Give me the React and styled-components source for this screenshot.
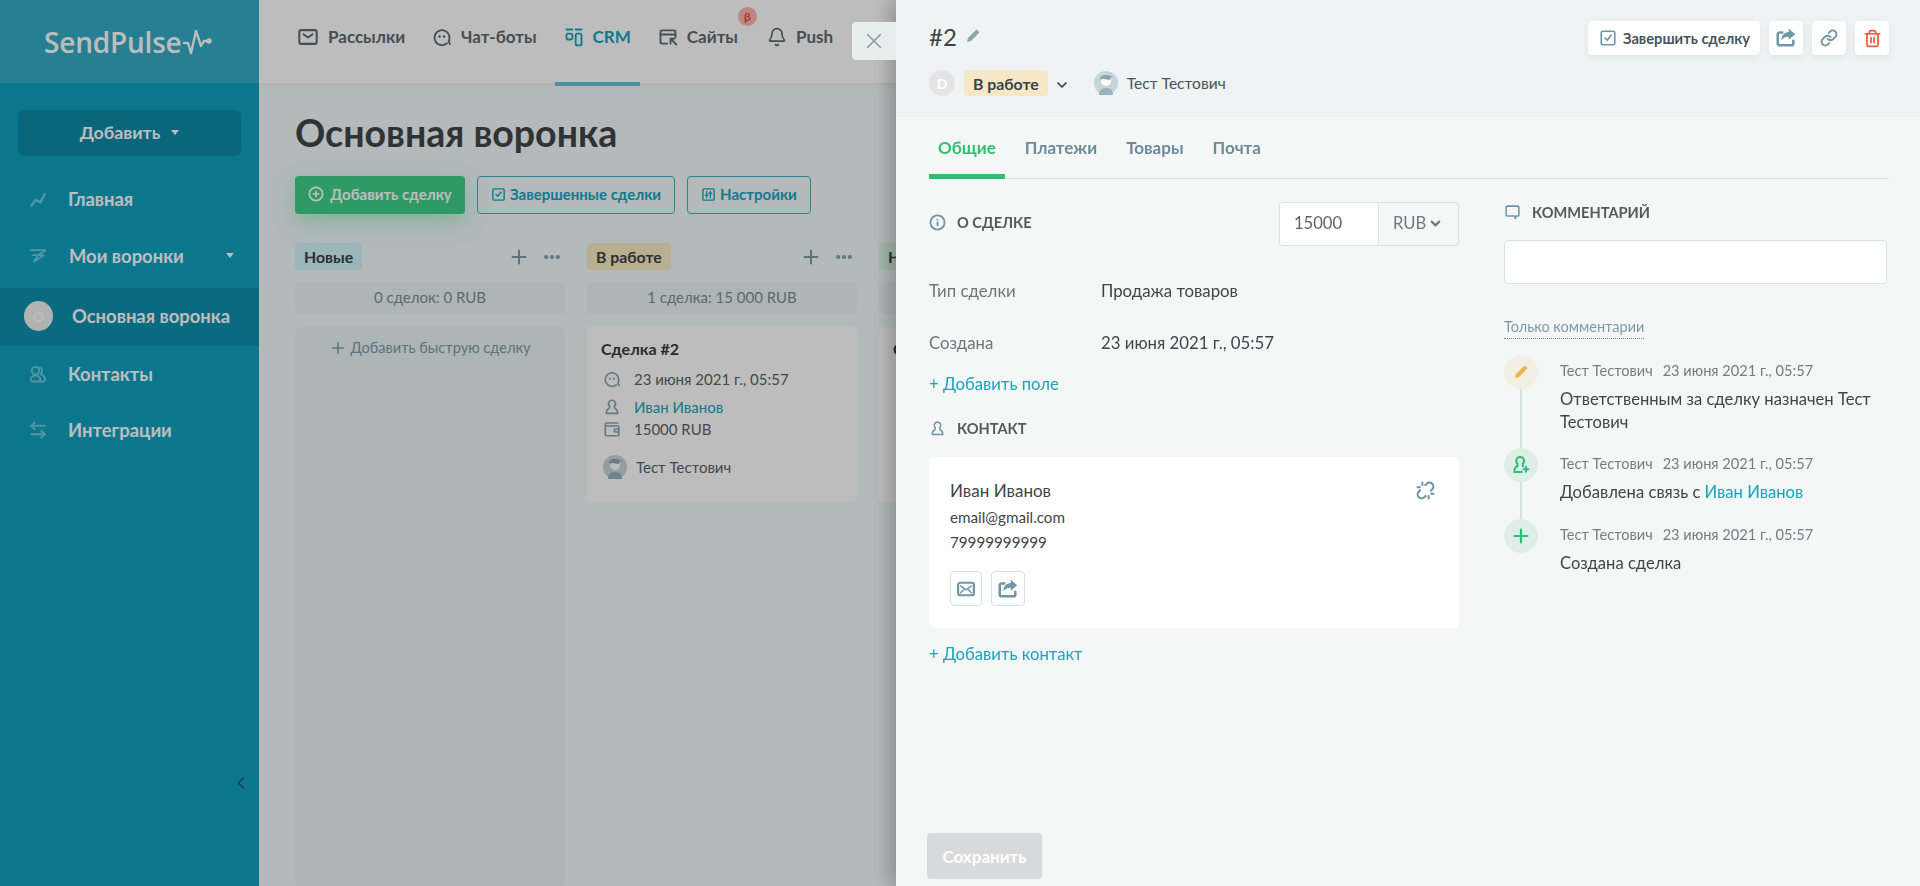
import React from 'react';
import styled, { createGlobalStyle } from 'styled-components';
import { Bell, ChevronDown, Plus, MoreHorizontal, Trash2, Link as LinkIcon, Unlink, X, ChevronLeft, Info, ArrowLeftRight } from 'lucide-react';

const GlobalStyle = createGlobalStyle`
  html, body { margin: 0; padding: 0; height: 100%; overflow: hidden; }
  body { font-family: Lato, "Noto Sans", sans-serif; color: #3c4245; }
  * { box-sizing: border-box; }
`;

const Page = styled.div`
  display: flex;
  height: 100vh;
  background: #f3fafb;
  overflow: hidden;
`;

const Sidebar = styled.aside`
  width: 259px;
  flex: none;
  background: #0fa1c1;
  display: flex;
  flex-direction: column;
  position: relative;
`;

const LogoBar = styled.div`
  height: 83px;
  background: #35acc8;
  display: flex;
  align-items: center;
  padding-left: 44px;
  gap: 1px;
`;

const LogoText = styled.span`
  font-family: "Open Sans", sans-serif;
  font-size: 28px;
  font-weight: 600;
  letter-spacing: -0.2px;
  color: #fff;
`;

const AddButton = styled.div`
  margin: 27px 18px 14px;
  height: 46px;
  background: #0d8aa7;
  border-radius: 6px;
  display: flex;
  align-items: center;
  justify-content: center;
  gap: 11px;
  padding-bottom: 2px;
  color: #fff;
  font-size: 17.8px;
  font-weight: 700;
`;

const Caret = styled.i`
  width: 0;
  height: 0;
  border: 4px solid transparent;
  border-top: 5px solid #fff;
  border-bottom: 0;
  display: block;
`;

const NavRow = styled.div`
  height: ${p => (p.$active ? 58 : p.$h || 57)}px;
  margin-top: ${p => (p.$active ? 4 : 0)}px;
  padding-bottom: ${p => (p.$active ? 2 : 0)}px;
  display: flex;
  align-items: center;
  padding-left: ${p => (p.$active ? 24 : 28)}px;
  gap: ${p => (p.$active ? 19 : 0)}px;
  background: ${p => (p.$active ? '#0e90ad' : 'transparent')};
  color: #fff;
  font-size: 18.4px;
  font-weight: 700;
  position: relative;
  svg { flex: none; color: #6fc9dd; }
`;

const NavLabel = styled.span`
  margin-left: ${p => p.$offset || 20}px;
`;

const NavCaret = styled(Caret)`
  position: absolute;
  right: 25px;
`;

const Bullet = styled.span`
  width: 29px;
  height: 30px;
  border-radius: 50%;
  background: #f0f0f0;
  color: #fff;
  font-size: 14px;
  font-weight: 700;
  display: flex;
  align-items: center;
  justify-content: center;
`;

const Collapse = styled.div`
  position: absolute;
  left: 231px;
  bottom: 93px;
  color: #0b4f60;
  line-height: 0;
`;

const Main = styled.main`
  flex: 1;
  min-width: 0;
  overflow: hidden;
`;

const TopBar = styled.nav`
  height: 83px;
  background: #fff;
  display: flex;
  padding-left: 29px;
  box-shadow: 0 1px 6px rgba(0, 0, 0, 0.08);
`;

const TopItem = styled.div`
  display: flex;
  align-items: center;
  gap: 9px;
  height: 86px;
  padding: 0 9px 9px;
  margin-right: ${p => p.$gap ?? 9}px;
  font-size: 17px;
  font-weight: 700;
  color: ${p => (p.$active ? '#13a5c0' : '#5d6a70')};
  border-bottom: 4px solid ${p => (p.$active ? '#6cc3d6' : 'transparent')};
  position: relative;
  white-space: nowrap;
`;

const Beta = styled.span`
  position: absolute;
  top: 7px;
  right: -10px;
  width: 19px;
  height: 19px;
  border-radius: 50%;
  background: #fdb5b5;
  color: #f0473f;
  font-size: 12px;
  display: flex;
  align-items: center;
  justify-content: center;
`;

const Content = styled.div`
  padding: 28px 0 0 36px;
`;

const Title = styled.h1`
  margin: 0 0 22px;
  font-size: 37.5px;
  line-height: 43px;
  font-weight: 700;
  color: #41464a;
  white-space: nowrap;
`;

const Actions = styled.div`
  display: flex;
  gap: 12px;
  margin-bottom: 29px;
`;

const GreenBtn = styled.div`
  width: 170px;
  height: 38px;
  padding-bottom: 2px;
  background: #3fd08a;
  color: #fff;
  border-radius: 4px;
  display: flex;
  align-items: center;
  justify-content: center;
  gap: 6px;
  font-size: 15px;
  font-weight: 700;
  box-shadow: 0 8px 24px rgba(63, 208, 138, 0.35);
`;

const OutlineBtn = styled.div`
  height: 38px;
  padding: 0 13px 2px;
  border: 1px solid #3eb0c8;
  color: #13a5c0;
  border-radius: 4px;
  display: flex;
  align-items: center;
  gap: 4px;
  font-size: 15px;
  font-weight: 700;
  white-space: nowrap;
`;

const Board = styled.div`
  display: flex;
  gap: 22px;
`;

const Column = styled.section`
  width: 270px;
  flex: none;
`;

const ColHead = styled.div`
  height: 27px;
  display: flex;
  align-items: center;
  justify-content: space-between;
  color: #7f9aa7;
  margin-bottom: 12px;
`;

const Tag = styled.span`
  background: ${p => p.$bg};
  border-radius: 4px;
  height: ${p => p.$h || 27}px;
  padding: 0 9px;
  display: inline-flex;
  align-items: center;
  color: #3c4245;
  font-size: 15.8px;
  font-weight: 700;
  white-space: nowrap;
`;

const ColTools = styled.div`
  display: flex;
  align-items: center;
  gap: 12px;
  padding-right: 3px;
`;

const Summary = styled.div`
  height: 32px;
  background: #ebf5f7;
  border-radius: 6px;
  display: flex;
  align-items: center;
  justify-content: center;
  padding-bottom: 2px;
  font-size: 15px;
  color: #7d8d95;
  margin-bottom: 13px;
`;

const Lane = styled.div`
  height: 560px;
  background: #ebf5f7;
  border-radius: 6px;
  padding-top: 12px;
  display: flex;
  justify-content: center;
  align-items: flex-start;
  gap: 3px;
  font-size: 14.6px;
  color: #7f9aa7;
`;

const Deal = styled.article`
  height: 175px;
  background: #fff;
  border-radius: 4px;
  padding: 12px 14px;
`;

const DealTitle = styled.div`
  font-size: 16px;
  font-weight: 700;
  line-height: 20px;
  margin-bottom: 5px;
  color: #363b3e;
`;

const DealRow = styled.div`
  display: flex;
  align-items: center;
  gap: 13px;
  height: ${p => p.$h || 27}px;
  padding-left: 2px;
  font-size: 15px;
  color: #5b6367;
  svg { flex: none; color: #8aa4b1; }
`;

const TealLink = styled.a`
  color: #14a3bd;
`;

const DealOwner = styled(DealRow)`
  margin-top: 15px;
  gap: 9px;
`;

const Backdrop = styled.div`
  position: fixed;
  inset: 0;
  background: rgba(0, 0, 0, 0.26);
`;

const Drawer = styled.div`
  position: fixed;
  top: 0;
  right: 0;
  bottom: 0;
  width: 1024px;
  background: #f5f7f7;
  box-shadow: -8px 0 16px rgba(0, 0, 0, 0.22);
  display: flex;
  flex-direction: column;
`;

const CloseBtn = styled.div`
  position: absolute;
  left: -44px;
  top: 22px;
  width: 44px;
  height: 38px;
  background: #e7eeee;
  border-radius: 4px 0 0 4px;
  display: flex;
  align-items: center;
  justify-content: center;
  color: #8e9a9e;
`;

const DrawerHead = styled.header`
  height: 117px;
  flex: none;
  background: #eff3f4;
  padding: 19px 31px 0 33px;
  display: flex;
  justify-content: space-between;
`;

const HeadLeft = styled.div`
  display: flex;
  flex-direction: column;
  gap: 17px;
`;

const DealNo = styled.div`
  display: flex;
  align-items: center;
  gap: 8px;
  height: 34px;
  font-size: 24px;
  color: #3c4245;
  svg { color: #8aa4b1; }
`;

const StatusRow = styled.div`
  display: flex;
  align-items: center;
  font-size: 15.6px;
  color: #4b5256;
`;

const Letter = styled.span`
  width: 26px;
  height: 26px;
  border-radius: 50%;
  background: #e4e4e4;
  color: #fff;
  font-size: 14px;
  font-weight: 700;
  display: flex;
  align-items: center;
  justify-content: center;
  margin-right: 9px;
`;

const StatusChevron = styled.span`
  display: flex;
  margin: 4px 24px 0 6px;
  color: #3c4245;
`;

const OwnerName = styled.span`
  margin-left: 9px;
`;

const HeadTools = styled.div`
  display: flex;
  gap: 9px;
  align-items: flex-start;
  margin-top: 2px;
`;

const ToolBtn = styled.div`
  height: 34px;
  min-width: 34px;
  padding: ${p => (p.$wide ? '0 10px 0 11px' : '0')};
  background: #fff;
  border-radius: 4px;
  box-shadow: 0 2px 6px rgba(120, 140, 150, 0.15);
  display: flex;
  align-items: center;
  justify-content: center;
  gap: 6px;
  font-size: 14.7px;
  font-weight: 700;
  white-space: nowrap;
  color: ${p => p.$color || '#4b5256'};
  svg { color: ${p => p.$icon || 'inherit'}; }
`;

const DrawerBody = styled.div`
  flex: 1;
  padding: 0 31px 0 33px;
  position: relative;
`;

const Tabs = styled.div`
  display: flex;
  height: 62px;
  border-bottom: 1px solid #d5e3e0;
`;

const Tab = styled.div`
  padding: 20px 9px 0;
  margin-right: 11px;
  height: 62px;
  font-size: 17px;
  font-weight: 700;
  color: ${p => (p.$active ? '#2ebf73' : '#6d8b99')};
  border-bottom: ${p => (p.$active ? '5px solid #2ebf73' : '0')};
`;

const Columns = styled.div`
  display: grid;
  grid-template-columns: 530px 383px;
  gap: 45px;
  padding-top: 23px;
`;

const SectionHead = styled.div`
  display: flex;
  align-items: center;
  gap: 11px;
  font-size: 14.6px;
  font-weight: 700;
  color: #53595d;
  height: ${p => p.$h || 'auto'};
  margin-top: ${p => p.$mt || 0}px;
  svg { color: #6f95a7; flex: none; }
`;

const AboutHead = styled.div`
  display: flex;
  justify-content: space-between;
  height: 44px;
  margin-bottom: 35px;
`;

const MoneyBox = styled.div`
  width: 180px;
  height: 44px;
  display: grid;
  grid-template-columns: 98px 1fr;
  border: 1px solid #d5e3e0;
  border-radius: 4px;
  overflow: hidden;
  font-size: 16.6px;
  color: #5b6367;
`;

const MoneyValue = styled.div`
  background: #fff;
  padding: 0 0 2px 14px;
  display: flex;
  align-items: center;
`;

const MoneyUnit = styled.div`
  border-left: 1px solid #d5e3e0;
  display: flex;
  align-items: center;
  gap: 2px;
  padding: 0 0 2px 14px;
  color: #6d7a80;
`;

const Field = styled.div`
  display: grid;
  grid-template-columns: 172px 1fr;
  height: 52px;
  font-size: 16.8px;
  line-height: 20px;
  color: #3f4548;
`;

const FieldName = styled.span`
  color: #6e7679;
`;

const AddLink = styled.div`
  font-size: 16.7px;
  line-height: 20px;
  margin-top: -11px;
  color: #1aa3bd;
`;

const BottomLink = styled(AddLink)`
  margin-top: 0;
`;

const ContactCard = styled.div`
  margin: 19px 0 16px;
  height: 171px;
  background: #fff;
  border-radius: 6px;
  padding: 23px 22px 23px 21px;
  position: relative;
`;

const ContactName = styled.div`
  font-size: 17px;
  line-height: 22px;
  color: #3f4548;
  margin-bottom: 3px;
`;

const ContactLine = styled.div`
  font-size: 15.2px;
  line-height: 25px;
  color: #3f4548;
`;

const UnlinkBox = styled.div`
  position: absolute;
  top: 24px;
  right: 24px;
  color: #6f95a7;
  line-height: 0;
`;

const ContactBtns = styled.div`
  display: flex;
  gap: 9px;
  margin-top: 16px;
`;

const SquareBtn = styled.div`
  width: ${p => p.$w || 32}px;
  height: 35px;
  border: 1px solid #d5e3e0;
  border-radius: 4px;
  display: flex;
  align-items: center;
  justify-content: center;
  color: #6f95a7;
`;

const CommentBox = styled.div`
  height: 44px;
  background: #fff;
  border: 1px solid #d5e3e0;
  border-radius: 4px;
  margin: 18px 0 32px;
`;

const OnlyComments = styled.span`
  display: inline-block;
  font-size: 14.5px;
  line-height: 18px;
  color: #7f9aa7;
  border-bottom: 1px dotted #5d8ea1;
  padding-bottom: 2px;
  margin-bottom: 16px;
`;

const Timeline = styled.div`
  display: flex;
  flex-direction: column;
`;

const Event = styled.div`
  display: grid;
  grid-template-columns: 34px 1fr;
  column-gap: 22px;
  min-height: ${p => p.$h}px;
  position: relative;
  &::before {
    content: '';
    display: ${p => (p.$last ? 'none' : 'block')};
    position: absolute;
    left: 16px;
    top: 34px;
    bottom: 0;
    width: 2px;
    background: #d5e3e0;
  }
`;

const EventIcon = styled.div`
  width: 34px;
  height: 34px;
  border-radius: 50%;
  background: ${p => p.$bg};
  color: ${p => p.$color};
  display: flex;
  align-items: center;
  justify-content: center;
`;

const EventMeta = styled.div`
  display: flex;
  gap: 10px;
  margin-top: 6px;
  font-size: 14.6px;
  line-height: 20px;
  color: #767d80;
`;

const EventText = styled.div`
  margin-top: 7px;
  font-size: 16.6px;
  line-height: 23px;
  color: #3f4548;
`;

const SaveBtn = styled.div`
  position: absolute;
  left: 31px;
  bottom: 7px;
  width: 115px;
  height: 46px;
  background: #d9dadc;
  border-radius: 4px;
  color: #fff;
  font-size: 17px;
  font-weight: 700;
  display: flex;
  align-items: center;
  justify-content: center;
`;

const Svg = ({ size = 18, children, ...rest }) => (
  <svg width={size} height={size} viewBox="0 0 24 24" fill="none" stroke="currentColor" strokeWidth="2.2" strokeLinecap="round" strokeLinejoin="round" {...rest}>
    {children}
  </svg>
);

const MailIcon = () => (
  <Svg size={22}><rect x="2.5" y="4.5" width="19" height="15" rx="2" /><path d="M7 9l5 3.5L17 9" /></Svg>
);
const ChatIcon = ({ size = 20 }) => (
  <Svg size={size}><path d="M18 19.5A9 9 0 1 1 21 13c0 1.5-.3 2.8-1 4l1.5 3.5" /><path d="M9 11.5h.01M14.5 11.5h.01" strokeWidth="3" /></Svg>
);
const CrmIcon = () => (
  <Svg size={20}><path d="M3 3h7M14 3h7" /><rect x="3" y="8" width="7" height="7" rx="2" /><rect x="14" y="8" width="7" height="14" rx="2" /></Svg>
);
const SiteIcon = () => (
  <Svg size={20}><path d="M11 20H5a2 2 0 0 1-2-2V6a2 2 0 0 1 2-2h14a2 2 0 0 1 2 2v6" /><path d="M3 9h18" /><path d="M15 14v6M15 14h5M15 14l7 7" /></Svg>
);
const ChartIcon = () => (
  <Svg size={20} strokeWidth="3"><path d="M4 20l5-7 6 3 5-10" /></Svg>
);
const FunnelIcon = () => (
  <Svg size={20}><path d="M3 5h18l-9 6h7l-12 8 5-8H6" /></Svg>
);
const PeopleIcon = () => (
  <Svg size={20}><circle cx="9" cy="8" r="4.5" /><path d="M4 21c-2-3 0-7 5-7s7 4 5 7z" /><path d="M14 4a4.5 4.5 0 0 1 1 8c4 1 7 5 4.500 9H15" /></Svg>
);
const PersonIcon = ({ size = 18 }) => (
  <Svg size={size}><path d="M12 3a4.5 4.5 0 0 1 3 8l1 3c3 1 3.5 3.5 3.5 6.5h-15c0-3 .5-5.5 3.5-6.5l1-3a4.5 4.5 0 0 1 3-8z" /></Svg>
);
const WalletIcon = () => (
  <Svg size={18}><path d="M20 4H5a2 2 0 0 0-2 2v13a2 2 0 0 0 2 2h15a1 1 0 0 0 1-1V9a1 1 0 0 0-1-1H3" /><path d="M21 12h-4a2 2 0 0 0 0 4h4" /></Svg>
);
const CheckBox = ({ size = 15 }) => (
  <Svg size={size}><rect x="3" y="3" width="18" height="18" rx="2" /><path d="M8 12l3 3 5-7" /></Svg>
);
const SlidersIcon = () => (
  <Svg size={15}><rect x="3" y="3" width="18" height="18" rx="2" /><path d="M9 7v10M15 7v10M7 13h4M13 10h4" /></Svg>
);
const ShareIcon = ({ size = 22 }) => (
  <svg width={size} height={size} viewBox="0 0 24 24" fill="none">
    <path d="M8 6H5a2 2 0 0 0-2 2v10a2 2 0 0 0 2 2h13a2 2 0 0 0 2-2v-3" stroke="currentColor" strokeWidth="2.8" strokeLinecap="round" />
    <path d="M15 2l7 6-7 6v-3.5c-3.5 0-6 1-8 4 0-5 3-8.500 8-9z" fill="currentColor" />
  </svg>
);
const FilledMail = () => (
  <svg width="20" height="20" viewBox="0 0 24 24" fill="none">
    <rect x="2.500" y="4.500" width="19" height="15" rx="2.500" fill="#fff" stroke="currentColor" strokeWidth="2.6" />
    <path d="M5 8l7 5 7-5M5 17l4.500-4.500M19 17l-4.500-4.500" stroke="currentColor" strokeWidth="1.800" />
  </svg>
);
const CommentIcon = () => (
  <Svg size={17}><path d="M5 3h14a2 2 0 0 1 2 2v10a2 2 0 0 1-2 2h-2l-1 3.500-1-3.500H5a2 2 0 0 1-2-2V5a2 2 0 0 1 2-2z" /></Svg>
);
const AddPerson = () => (
  <svg width="20" height="20" viewBox="0 0 24 24" fill="none" stroke="currentColor" strokeWidth="2.4" strokeLinecap="round" strokeLinejoin="round">
    <path d="M11 2.500a4.500 4.500 0 0 1 3 8l.5 3M7.500 13.500c-3 1-3.500 4-3.500 7h9" /><path d="M11 2.500a4.500 4.500 0 0 0-3 8l-.5 3" /><path d="M18 14v6M15 17h6" />
  </svg>
);
const PencilFill = ({ size = 16 }) => (
  <svg width={size} height={size} viewBox="0 0 24 24" fill="currentColor"><path d="M3 21l1.500-6L16 3.500a2.100 2.100 0 0 1 3 0l1.500 1.500a2.100 2.100 0 0 1 0 3L9 19.500z" /></svg>
);
const UserPic = ({ size = 24 }) => (
  <svg width={size} height={size} viewBox="0 0 24 24">
    <circle cx="12" cy="12" r="12" fill="#c5d6da" />
    <circle cx="12" cy="10" r="5" fill="#fff" />
    <path d="M6 9c0-4 3-5 6-5s5 1 7 2l-3 1v2c-3 0-7-2-10 0z" fill="#8ba5af" />
    <path d="M5 24c0-5 3-7 7-7s7 2 7 7z" fill="#9ab2bb" />
  </svg>
);

const ColumnHeader = ({ label, bg }) => (
  <ColHead>
    <Tag $bg={bg}>{label}</Tag>
    <ColTools>
      <Plus size={22} strokeWidth={2.2} />
      <MoreHorizontal size={20} strokeWidth={3} />
    </ColTools>
  </ColHead>
);

const events = [
  { h: 93, bg: '#f3efe3', color: '#eeb64a', icon: <PencilFill />, text: 'Ответственным за сделку назначен Тест Тестович' },
  { h: 71, bg: '#dfeee8', color: '#2ebf73', icon: <AddPerson />, text: <>Добавлена связь с <TealLink>Иван Иванов</TealLink></> },
  { h: 70, bg: '#dfeee8', color: '#2ebf73', icon: <Plus size={22} strokeWidth={2.4} />, text: 'Создана сделка', last: true },
];

export default function App() {
  return (
    <Page>
      <GlobalStyle />
      <Sidebar>
        <LogoBar>
          <LogoText>SendPulse</LogoText>
          <svg width="30" height="28" viewBox="0 0 30 28" fill="none" stroke="#fff" strokeWidth="2.4" strokeLinecap="round" strokeLinejoin="round">
            <path d="M1 15h4l3 10 5-22 5 15 3-5h6" />
            <circle cx="26" cy="13" r="1.500" fill="#fff" />
          </svg>
        </LogoBar>
        <AddButton>Добавить <Caret /></AddButton>
        <NavRow><ChartIcon /><NavLabel>Главная</NavLabel></NavRow>
        <NavRow><FunnelIcon /><NavLabel $offset={21}>Мои воронки</NavLabel><NavCaret /></NavRow>
        <NavRow $active><Bullet>О</Bullet><span>Основная воронка</span></NavRow>
        <NavRow $h={56}><PeopleIcon /><NavLabel>Контакты</NavLabel></NavRow>
        <NavRow $h={56}><ArrowLeftRight size={20} strokeWidth={2.4} /><NavLabel>Интеграции</NavLabel></NavRow>
        <Collapse><ChevronLeft size={20} strokeWidth={1.500} /></Collapse>
      </Sidebar>
      <Main>
        <TopBar>
          <TopItem><MailIcon />Рассылки</TopItem>
          <TopItem><ChatIcon />Чат-боты</TopItem>
          <TopItem $active><CrmIcon />CRM</TopItem>
          <TopItem $gap={11}><SiteIcon />Сайты<Beta>β</Beta></TopItem>
          <TopItem><Bell size={20} strokeWidth={2} />Push</TopItem>
        </TopBar>
        <Content>
          <Title>Основная воронка</Title>
          <Actions>
            <GreenBtn>
              <svg width="16" height="16" viewBox="0 0 24 24" fill="none" stroke="currentColor" strokeWidth="2.6"><circle cx="12" cy="12" r="10" /><path d="M12 7v10M7 12h10" /></svg>
              Добавить сделку
            </GreenBtn>
            <OutlineBtn><CheckBox />Завершенные сделки</OutlineBtn>
            <OutlineBtn><SlidersIcon />Настройки</OutlineBtn>
          </Actions>
          <Board>
            <Column>
              <ColumnHeader label="Новые" bg="#d1f4fa" />
              <Summary>0 сделок: 0 RUB</Summary>
              <Lane><Plus size={18} strokeWidth={2.2} />Добавить быструю сделку</Lane>
            </Column>
            <Column>
              <ColumnHeader label="В работе" bg="#f9ecc3" />
              <Summary>1 сделка: 15 000 RUB</Summary>
              <Deal>
                <DealTitle>Сделка #2</DealTitle>
                <DealRow $h={30}><ChatIcon size={18} />23 июня 2021 г., 05:57</DealRow>
                <DealRow $h={26}><PersonIcon />
                  <TealLink>Иван Иванов</TealLink>
                </DealRow>
                <DealRow $h={18}><WalletIcon />15000 RUB</DealRow>
                <DealOwner><UserPic />Тест Тестович</DealOwner>
              </Deal>
            </Column>
            <Column>
              <ColHead><Tag $bg="#dcf8e6">Н</Tag></ColHead>
              <Summary />
              <Deal>
                <DealTitle>С</DealTitle>
                <DealRow $h={30}><ChatIcon size={18} /></DealRow>
                <DealRow $h={26}><PersonIcon /></DealRow>
                <DealRow $h={18}><WalletIcon /></DealRow>
              </Deal>
            </Column>
          </Board>
        </Content>
      </Main>
      <Backdrop />
      <Drawer>
        <CloseBtn><X size={26} strokeWidth={1.500} /></CloseBtn>
        <DrawerHead>
          <HeadLeft>
            <DealNo>#2 <PencilFill size={16} /></DealNo>
            <StatusRow>
              <Letter>D</Letter>
              <Tag $bg="#f6e8c6" $h={26}>В работе</Tag>
              <StatusChevron><ChevronDown size={16} strokeWidth={2.600} /></StatusChevron>
              <UserPic />
              <OwnerName>Тест Тестович</OwnerName>
            </StatusRow>
          </HeadLeft>
          <HeadTools>
            <ToolBtn $wide $icon="#6f95a7"><CheckBox size={18} />Завершить сделку</ToolBtn>
            <ToolBtn $color="#6f95a7"><ShareIcon /></ToolBtn>
            <ToolBtn $color="#6f95a7"><LinkIcon size={18} strokeWidth={2.600} /></ToolBtn>
            <ToolBtn $color="#f3593d"><Trash2 size={19} strokeWidth={2.200} /></ToolBtn>
          </HeadTools>
        </DrawerHead>
        <DrawerBody>
          <Tabs>
            <Tab $active>Общие</Tab>
            <Tab>Платежи</Tab>
            <Tab>Товары</Tab>
            <Tab>Почта</Tab>
          </Tabs>
          <Columns>
            <div>
              <AboutHead>
                <SectionHead $h="40px"><Info size={17} strokeWidth={2.600} />О СДЕЛКЕ</SectionHead>
                <MoneyBox>
                  <MoneyValue>15000</MoneyValue>
                  <MoneyUnit>RUB <ChevronDown size={15} strokeWidth={3.400} /></MoneyUnit>
                </MoneyBox>
              </AboutHead>
              <Field><FieldName>Тип сделки</FieldName><span>Продажа товаров</span></Field>
              <Field><FieldName>Создана</FieldName><span>23 июня 2021 г., 05:57</span></Field>
              <AddLink>+ Добавить поле</AddLink>
              <SectionHead $h="20px" $mt={24}><PersonIcon size={17} />КОНТАКТ</SectionHead>
              <ContactCard>
                <ContactName>Иван Иванов</ContactName>
                <ContactLine>email@gmail.com</ContactLine>
                <ContactLine>79999999999</ContactLine>
                <UnlinkBox><Unlink size={19} strokeWidth={2.600} /></UnlinkBox>
                <ContactBtns>
                  <SquareBtn><FilledMail /></SquareBtn>
                  <SquareBtn $w={34}><ShareIcon /></SquareBtn>
                </ContactBtns>
              </ContactCard>
              <BottomLink>+ Добавить контакт</BottomLink>
            </div>
            <div>
              <SectionHead $h="20px"><CommentIcon />КОММЕНТАРИЙ</SectionHead>
              <CommentBox />
              <OnlyComments>Только комментарии</OnlyComments>
              <Timeline>
                {events.map((ev, i) => (
                  <Event key={i} $h={ev.h} $last={ev.last}>
                    <EventIcon $bg={ev.bg} $color={ev.color}>{ev.icon}</EventIcon>
                    <div>
                      <EventMeta><span>Тест Тестович</span><span>23 июня 2021 г., 05:57</span></EventMeta>
                      <EventText>{ev.text}</EventText>
                    </div>
                  </Event>
                ))}
              </Timeline>
            </div>
          </Columns>
          <SaveBtn>Сохранить</SaveBtn>
        </DrawerBody>
      </Drawer>
    </Page>
  );
}
